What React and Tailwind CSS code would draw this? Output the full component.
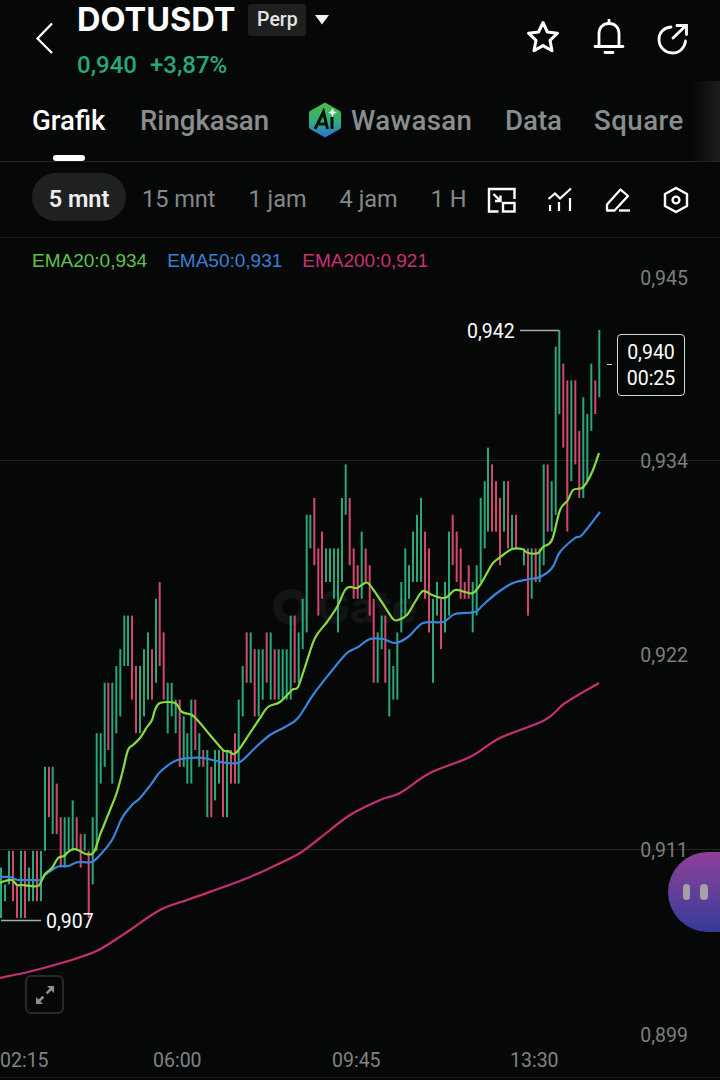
const GREEN = "#2aa67b"
const RED = "#d4466b"

// level n = ticks below the 0,942 high, each tick about 16.8px
const levelY = (n) => 330 + n * 16.8

// x, top tick, bottom tick, g/r
const candles = [
  [1, 32, 35, "g"], [5, 33, 34, "g"], [9, 31, 33, "g"], [13, 31, 34, "r"], [17, 33, 35, "r"], [21, 31, 35, "g"],
  [25, 31, 35, "r"], [29, 32, 34, "g"], [33, 31, 34, "g"], [37, 31, 34, "r"], [41, 31, 34, "g"], [45, 26, 31, "g"],
  [49, 26, 29, "r"], [52.7, 26, 30, "g"], [56.7, 27, 30, "r"], [60.7, 29, 32, "r"], [64.7, 29, 32, "g"], [68.7, 29, 31, "g"],
  [72.7, 28, 31, "g"], [76.7, 29, 31, "r"], [80.7, 30, 32, "r"], [84.7, 30, 31, "g"], [88.7, 31, 35, "r"], [92.7, 29, 33, "g"],
  [96.7, 24, 31, "g"], [100.7, 24, 27, "g"], [104.7, 21, 26, "g"], [108.3, 21, 25, "r"], [112.3, 21, 27, "g"], [116.3, 20, 24, "g"],
  [120.3, 19, 23, "g"], [124.3, 17, 20, "g"], [128, 17, 20, "g"], [132, 17, 22, "r"], [136, 20, 24, "r"], [140, 20, 24, "g"],
  [144, 19, 23, "g"], [148, 18, 22, "g"], [152, 19, 22, "r"], [156, 16, 21, "g"], [159.7, 15, 20, "r"], [163.7, 18, 22, "r"],
  [167.7, 21, 24, "g"], [171.7, 21, 23, "g"], [175.7, 22, 24, "g"], [179.7, 22, 26, "r"], [183.7, 23, 26, "g"], [187.3, 24, 27, "g"],
  [191.3, 22, 27, "g"], [195.3, 22, 25, "r"], [199.3, 24, 26, "g"], [203.3, 25, 26, "r"], [207.3, 25, 29, "g"], [211.3, 26, 29, "r"],
  [215, 25, 28, "g"], [219, 25, 27, "g"], [223, 25, 29, "r"], [227, 25, 29, "g"], [231, 25, 27, "r"], [235, 24, 27, "r"],
  [238.7, 22, 27, "g"], [242.7, 20, 23, "g"], [246.7, 18, 21, "r"], [250.7, 18, 21, "g"], [254.7, 19, 23, "r"], [258.7, 19, 23, "g"],
  [262.7, 19, 22, "g"], [266.7, 18, 21, "r"], [270.7, 18, 22, "g"], [274.7, 19, 22, "r"], [278.7, 19, 22, "g"], [282.7, 19, 22, "g"],
  [286.7, 19, 22, "g"], [290.7, 17, 22, "g"], [294.7, 17, 21, "r"], [298.7, 18, 21, "g"], [302.7, 16, 19, "g"], [306.7, 11, 18, "g"],
  [310.3, 11, 13, "g"], [314.3, 10, 14, "r"], [318.3, 13, 17, "r"], [322, 12, 16, "r"], [326, 13, 15, "g"], [330, 13, 15, "g"],
  [334, 13, 16, "g"], [338, 13, 18, "g"], [342, 10, 15, "g"], [345.7, 8, 11, "g"], [349.7, 10, 14, "r"], [353.7, 13, 16, "r"],
  [357.7, 14, 16, "r"], [361.7, 12, 16, "g"], [365.7, 13, 15, "r"], [369.7, 14, 17, "r"], [373.7, 16, 21, "r"], [377.7, 18, 21, "g"],
  [381.7, 17, 19, "g"], [385.3, 17, 21, "r"], [389.3, 19, 23, "g"], [393.3, 20, 22, "g"], [397.3, 18, 22, "g"], [401.3, 15, 18, "g"],
  [405.3, 13, 17, "g"], [409, 14, 16, "g"], [413, 12, 15, "g"], [417, 11, 15, "g"], [421, 10, 15, "g"], [425, 12, 16, "r"],
  [429, 13, 18, "r"], [433, 16, 21, "g"], [437, 15, 17, "g"], [441, 16, 19, "r"], [445, 15, 18, "g"], [449, 12, 17, "g"],
  [452.7, 11, 14, "r"], [456.7, 12, 15, "r"], [460.7, 13, 16, "r"], [464.7, 15, 16, "r"], [468.7, 14, 16, "r"], [472.7, 15, 18, "g"],
  [476.7, 14, 17, "g"], [480.7, 10, 15, "g"], [484.7, 9, 13, "g"], [488, 7, 12, "g"], [492, 8, 12, "r"], [496, 9, 12, "r"],
  [500, 10, 14, "r"], [504, 9, 12, "g"], [508, 9, 13, "r"], [512, 11, 13, "g"], [516, 11, 13, "r"], [524, 13, 14, "g"],
  [528, 13, 17, "r"], [531.7, 13, 16, "g"], [535.7, 13, 15, "r"], [539.7, 13, 15, "g"], [543.7, 8, 14, "g"], [547.7, 8, 12, "r"],
  [551.7, 9, 12, "g"], [555.7, 1, 11, "g"], [559.3, 0, 5, "g"], [563.3, 2, 7, "r"], [567.3, 3, 12, "r"], [571.3, 3, 9, "g"],
  [575.3, 3, 8, "r"], [579.3, 6, 10, "r"], [583.3, 4, 10, "g"], [587.3, 5, 9, "g"], [591.3, 2, 6, "g"], [595.3, 3, 5, "r"],
  [599.3, 0, 4, "g"],
]

const ema20 = "0,883 5,881 12,880 17,885 22,885 30,886 38,886 41,882 45,874 52,868 58,858 64,856 68,852 74,849 80,851 86,854 92,854 95,850 100,835 104,825 110,810 116.7,793 123,770 128,750 133,745 140,738 147,727 152,720 155,710 160,703 175,703 182,712 192,715 200,723 210,735 223,750 228,751 234,754 240,748 250,733 260,718 268,707 280,702 292,690 298,687 305,667 315,638 327,622 337,607 345,590 350,587 357,588 365,583 369,584 377,595 385,607 393,619 398,620 407,615 415,602 423,591 432,595 445,598 455,590 465,592 473,593 480,585 487,573 493,563 503,555 512,549 522,549 528,553 538,553 543,547 552,540 560,510 568,500 573,490 582,488 587,482 593,470 599,453"
const ema50 = "0,877 10,877 18,880 30,880 41,880 45,875 55,868 60,866 68,866 75,863 80,862 92,862 100,855 112,840 122,818 132,805 140,798 152,783 160,772 175,761 190,758 203,758 217,761 227,763 240,762 255,748 270,735 285,727 298,718 313,695 330,673 345,655 352,650 358,647 370,639 383,639 395,643 408,637 423,623 443,622 455,614 475,612 483,605 497,593 513,583 530,579 540,577 552,568 560,552 575,538 582,535 600,512"
const ema200 = "0,978 40,969 92,953 115,940 130,930 160,910 190,899 240,881 270,868 300,853 320,838 350,815 380,800 400,793 430,773 470,757 500,738 545,720 565,703 599,683"

// catmull-rom through the read off points, the lines in the chart are smooth
function smoothPath(points) {
  const p = points.split(" ").map((s) => s.split(",").map(Number))
  let d = `M${p[0][0]} ${p[0][1]}`
  for (let i = 0; i < p.length - 1; i += 1) {
    const a = p[i - 1] || p[i]
    const b = p[i]
    const c = p[i + 1]
    const e = p[i + 2] || c
    const c1x = b[0] + (c[0] - a[0]) / 6
    const c1y = b[1] + (c[1] - a[1]) / 6
    const c2x = c[0] - (e[0] - b[0]) / 6
    const c2y = c[1] - (e[1] - b[1]) / 6
    d += ` C${c1x} ${c1y} ${c2x} ${c2y} ${c[0]} ${c[1]}`
  }
  return d
}

function PriceLabel({ top, children }) {
  return (
    <div className="absolute right-[32px] text-[19.5px] leading-none text-[#7b7e7e]" style={{ top }}>
      {children}
    </div>
  )
}

function TimeLabel({ left, children }) {
  return (
    <div className="absolute top-[813px] text-[19.5px] leading-none text-[#808383]" style={{ left }}>
      {children}
    </div>
  )
}

function AiBadge() {
  return (
    <svg width="36" height="38" viewBox="0 0 36 38" className="shrink-0">
      <defs>
        <linearGradient id="aiHex" x1="0" y1="0" x2="0" y2="1">
          <stop offset="0" stopColor="#55b93f" />
          <stop offset="0.55" stopColor="#2fae7e" />
          <stop offset="1" stopColor="#2a6fe0" />
        </linearGradient>
      </defs>
      <path d="M18 1.5 L33 10 Q34 10.6 34 12 L34 26 Q34 27.4 33 28 L18 36.5 L3 28 Q2 27.4 2 26 L2 12 Q2 10.6 3 10 Z" fill="url(#aiHex)" />
      <path d="M8 28 L16.5 11 L20.5 28 M12 23 H19" fill="none" stroke="#07100c" strokeWidth="3" />
      <path d="M25 16 V28" stroke="#07100c" strokeWidth="3" />
      <path d="M25.5 7 L26.8 10.2 L30 11.5 L26.8 12.8 L25.5 16 L24.2 12.8 L21 11.5 L24.2 10.2 Z" fill="#eafff0" />
    </svg>
  )
}

export default function App() {
  return (
    <div className="w-[720px] h-[1080px] overflow-hidden bg-[#060808] text-white font-['Roboto',sans-serif]">
      {/* top bar */}
      <div className="relative flex h-[81px] pl-[34px]">
        <svg width="22" height="34" viewBox="0 0 22 34" className="mt-[21px]">
          <path d="M18 2.5 L3.5 17.5 L18 32" fill="none" stroke="#fff" strokeWidth="2.3" />
        </svg>
        <div className="ml-[21px]">
          <div className="flex items-center h-[40px]">
            <span className="font-['Inter',sans-serif] text-[32.5px] font-bold leading-none">DOTUSDT</span>
            <span className="ml-[13px] flex h-[32px] w-[58px] items-center justify-center rounded-[3px] bg-[#1e1f1f] text-[19.5px] font-medium text-[#e4e5e5]">
              Perp
            </span>
            <svg width="14" height="10" viewBox="0 0 14 10" className="ml-[9px]">
              <path d="M0 0 H14 L7 9.5 Z" fill="#f2f2f2" />
            </svg>
          </div>
          <div className="mt-[10px] flex gap-[13px] text-[24px] font-medium leading-[30px] text-[#26a878]">
            <span>0,940</span>
            <span>+3,87%</span>
          </div>
        </div>
        <div className="ml-auto mr-[31px] mt-[19px] flex items-start gap-[32px]">
          <svg width="36" height="36" viewBox="0 0 36 36">
            <path d="M18 3.5 L22.4 13 L32.5 14.2 L25 21.3 L27 31.8 L18 26.6 L9 31.8 L11 21.3 L3.5 14.2 L13.6 13 Z" fill="none" stroke="#fff" strokeWidth="3" strokeLinejoin="round" />
          </svg>
          <svg width="32" height="36" viewBox="0 0 32 36">
            <path d="M2 27.5 H30 M6 27 V14.5 C6 8.5 10 4.5 16 4.5 C22 4.5 26 8.5 26 14.5 V27" fill="none" stroke="#fff" strokeWidth="2.8" strokeLinecap="round" />
            <path d="M16 1 V4 M12 33.5 H20" fill="none" stroke="#fff" strokeWidth="2.8" strokeLinecap="round" />
          </svg>
          <svg width="32" height="34" viewBox="0 0 32 34" className="mt-[3px]">
            <path d="M14 5 C7 5.500 2 10.500 2 17.500 C2 25 8 31 15.500 31 C22.500 31 28 25.500 28.500 19" fill="none" stroke="#fff" strokeWidth="2.8" strokeLinecap="round" />
            <path d="M16 16 L28 4.500 M20 3.500 H29.500 V12.500" fill="none" stroke="#fff" strokeWidth="2.8" strokeLinecap="round" />
          </svg>
        </div>
      </div>

      {/* tabs */}
      <div className="relative flex h-[81px] items-start border-b border-[#232525] pl-[32px] pt-[21px] text-[27.6px] font-medium leading-[38px] text-[#8a8d8d]">
        <div className="relative w-[108px] text-white">
          Grafik
          <div className="absolute left-[21px] top-[53px] h-[6px] w-[32px] rounded-full bg-white" />
        </div>
        <div className="w-[167px]">Ringkasan</div>
        <div className="-mt-[1px] flex w-[198px] items-start gap-[8px]">
          <AiBadge />
          <span className="mt-[1px] tracking-[0.4px]">Wawasan</span>
        </div>
        <div className="w-[89px]">Data</div>
        <div className="tracking-[0.5px]">Square</div>
        <div className="absolute right-0 top-0 h-[80px] w-[28px] bg-gradient-to-r from-[#060808] to-[#1c1d1d]" />
      </div>

      {/* interval bar */}
      <div className="flex h-[76px] items-center border-b border-[#1d1f1f] pl-[32px] text-[23.5px] leading-none text-[#858888]">
        <div className="-mt-[5px] flex h-[48px] w-[94px] items-center justify-center rounded-full bg-[#1f2020] font-semibold text-[#eeeeee]">
          <span className="mt-[5px]">5 mnt</span>
        </div>
        <div className="ml-[16px]">15 mnt</div>
        <div className="ml-[33px]">1 jam</div>
        <div className="ml-[33px]">4 jam</div>
        <div className="ml-[33px]">1 H</div>
        <svg width="30" height="26" viewBox="0 0 30 26" className="ml-[21px]">
          <path d="M27.500 12 V2 H2 V24.500 H11.500" fill="none" stroke="#fff" strokeWidth="2.400" />
          <rect x="16" y="16" width="11.500" height="8.500" fill="none" stroke="#fff" strokeWidth="2.400" />
          <path d="M6.500 7 L13.500 14 M13.500 8.500 V14 H8" fill="none" stroke="#fff" strokeWidth="2.400" />
        </svg>
        <svg width="26" height="26" viewBox="0 0 26 26" className="ml-[30px]">
          <path d="M1.500 12 L8 6.500 L13 11.500 L24 1.500" fill="none" stroke="#fff" strokeWidth="2.200" />
          <path d="M3 18 V24 M12 15 V24 M23 11 V24" fill="none" stroke="#fff" strokeWidth="2.200" />
        </svg>
        <svg width="26" height="26" viewBox="0 0 26 26" className="ml-[32px]">
          <path d="M2 23.500 V17.500 L15.500 2.500 L23 9 L9.500 23.500 Z" fill="none" stroke="#fff" strokeWidth="2.300" strokeLinejoin="round" />
          <path d="M14 23.500 H25" stroke="#fff" strokeWidth="2.300" />
        </svg>
        <svg width="26" height="28" viewBox="0 0 26 28" className="ml-[32px]">
          <path d="M13 2 L24 8 V20 L13 26 L2 20 V8 Z" fill="none" stroke="#fff" strokeWidth="2.400" strokeLinejoin="round" />
          <circle cx="13" cy="14" r="3.400" fill="none" stroke="#fff" strokeWidth="2.400" />
        </svg>
      </div>

      {/* chart */}
      <div className="relative h-[842px]">
        <div className="absolute left-[32px] top-[12px] flex gap-[20px] font-['Liberation_Sans',sans-serif] text-[19px] leading-[22px]">
          <span className="text-[#5cc44a]">EMA20:0,934</span>
          <span className="text-[#3c7fd6]">EMA50:0,931</span>
          <span className="text-[#c92f78]">EMA200:0,921</span>
        </div>

        <div className="absolute left-[273px] top-[347px] flex items-center gap-[8px] text-[#131515]">
          <div className="h-[36px] w-[36px] rounded-full border-[9px] border-[#131515]" />
          <span className="font-['Inter',sans-serif] text-[44px] font-bold leading-[44px]">Gate</span>
        </div>

        <svg width="720" height="842" viewBox="0 238 720 842" className="absolute left-0 top-0">
          <path d="M0 460.500 H720 M0 849.500 H720" stroke="#232525" strokeWidth="1" />
          <path d="M0 1077.500 H720" stroke="#1a1c1c" strokeWidth="1" />
          {candles.map(([x, top, bottom, c]) => (
            <rect key={x} x={x - 1} y={levelY(top)} width="2" height={levelY(bottom) - levelY(top)} fill={c === "g" ? GREEN : RED} />
          ))}
          <path d={smoothPath(ema200)} fill="none" stroke="#c62e75" strokeWidth="2.200" />
          <path d={smoothPath(ema50)} fill="none" stroke="#3a84dc" strokeWidth="2.200" />
          <path d={smoothPath(ema20)} fill="none" stroke="#86dc3e" strokeWidth="2.200" />
          <path d="M520 330.500 H559 M1 920.500 H41" stroke="#a9abab" strokeWidth="1.400" fill="none" />
          <path d="M607 364.500 H612" stroke="#d0d0d0" strokeWidth="1" />
        </svg>

        <PriceLabel top={31}>0,945</PriceLabel>
        <PriceLabel top={214}>0,934</PriceLabel>
        <PriceLabel top={408}>0,922</PriceLabel>
        <PriceLabel top={603}>0,911</PriceLabel>
        <PriceLabel top={788}>0,899</PriceLabel>

        <TimeLabel left={0}>02:15</TimeLabel>
        <TimeLabel left={153}>06:00</TimeLabel>
        <TimeLabel left={332}>09:45</TimeLabel>
        <TimeLabel left={510}>13:30</TimeLabel>

        <div className="absolute left-[467px] top-[84px] text-[19.5px] leading-none text-white">0,942</div>
        <div className="absolute left-[46px] top-[674px] text-[19.5px] leading-none text-white">0,907</div>

        <div className="absolute left-[617px] top-[96px] flex h-[62px] w-[68px] flex-col items-center justify-center rounded-[4px] border border-[#d8d8d8] bg-[#060808] pt-[2px] text-[19.5px] leading-[26px] text-white">
          <span>0,940</span>
          <span>00:25</span>
        </div>

        <div className="absolute left-[25px] top-[737px] flex h-[39px] w-[39px] items-center justify-center rounded-[6px] border-2 border-[#272929]">
          <svg width="20" height="20" viewBox="0 0 20 20">
            <path d="M12 1 H19 V8 L16.400 5.400 L12.500 9.300 L10.700 7.500 L14.600 3.600 Z M8 19 H1 V12 L3.600 14.600 L7.500 10.700 L9.300 12.500 L5.400 16.400 Z" fill="#8d8f8f" />
          </svg>
        </div>

        <div className="absolute right-0 top-[614px] flex h-[80px] w-[52px] items-center gap-[10px] rounded-l-[40px] bg-gradient-to-b from-[#8e3f98] to-[#34399a] pl-[15px]">
          <div className="h-[16px] w-[7px] rounded-full bg-[#a3a0a8]" />
          <div className="h-[16px] w-[8px] rounded-full bg-[#a3a0a8]" />
        </div>
      </div>
    </div>
  )
}
